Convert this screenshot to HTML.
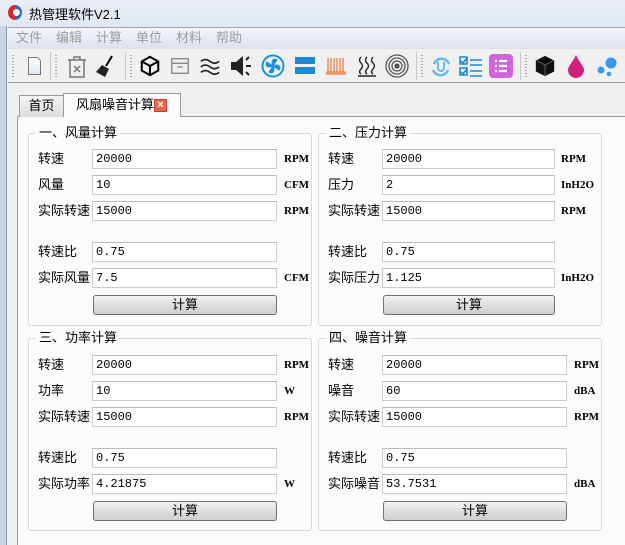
<!DOCTYPE html>
<html><head><meta charset="utf-8"><style>
*{margin:0;padding:0;box-sizing:border-box}
body{width:625px;height:545px;overflow:hidden;background:#f0f0f0;font-family:"Liberation Sans","Noto Sans CJK SC",sans-serif;font-size:12px;color:#000;position:relative}
.a{position:absolute}
.title{left:0;top:0;width:625px;height:28px;background:linear-gradient(#e9eef5,#dfe7f1)}
.frame{left:0;top:26px;width:7px;height:519px;background:#c8d5e5;border-right:1px solid #8e9aa8}
.menu{left:8px;top:27px;width:617px;height:22px;background:linear-gradient(#f4f6fa,#dbe1ec);border-top:1px solid #9aa6b5}
.menu span{position:absolute;top:0;line-height:20px;color:#9c9c9c;font-size:13px}
.tb{left:8px;top:49px;width:617px;height:34px;background:#f0f0f0;border-bottom:1px solid #a0a0a0}
.sep{position:absolute;top:3px;width:1px;height:28px;background:#c8c8c8}
.grip{position:absolute;top:6px;width:2px;height:22px;background:repeating-linear-gradient(#aaa 0 1px,transparent 1px 3px)}
.panel{left:17px;top:116px;width:608px;height:429px;background:#fbfbfb;border-top:1px solid #9a9a9a;border-left:1px solid #9a9a9a}
.tab1{left:19px;top:95px;width:45px;height:22px;background:linear-gradient(#f4f4f4,#dcdcdc);border:1px solid #9a9a9a;border-bottom:none;font-size:13px;text-align:center;line-height:20px}
.tab2{left:63px;top:93px;width:118px;height:24px;background:#fbfbfb;border:1px solid #9a9a9a;border-bottom:none;font-size:13px;line-height:22px;padding-left:12px}
.x{position:absolute;left:90px;top:5px;width:13px;height:13px;background:#e8674a;border:1px solid #c0402a;color:#fff;font-size:11px;line-height:10px;text-align:center;font-weight:bold}
.grp{position:absolute;border:1px solid #d5dbe3;border-radius:3px}
.gt{position:absolute;top:-10px;left:7px;background:#fbfbfb;padding:0 3px;font-size:13px;line-height:18px}
.lbl{position:absolute;font-size:13px;line-height:20px}
.in{position:absolute;height:20px;background:#fff;border:1px solid #c9ccd0;border-top-color:#b8bcc2;font-family:"Liberation Mono",monospace;font-size:12px;line-height:18px;padding-left:3px}
.u{position:absolute;font-family:"Liberation Serif",serif;font-size:11px;font-weight:bold}
.btn{position:absolute;height:20px;border:1px solid #707070;border-radius:3px;background:linear-gradient(#f4f4f4,#dedede 50%,#cfcfcf);text-align:center;font-size:13px;line-height:18px}
</style></head><body>
<div class="a title"></div>
<div class="a" style="left:8px;top:5px;width:14px;height:15px;border-radius:50%;background:radial-gradient(circle at 60% 50%,#fff 30%,transparent 32%),linear-gradient(90deg,#d8262b 50%,#2a6ab5 50%)"></div>
<div class="a" style="left:29px;top:4px;font-size:13px">热管理软件V2.1</div>
<div class="a frame"></div>
<div class="a menu"><span style="left:8px">文件</span><span style="left:48px">编辑</span><span style="left:88px">计算</span><span style="left:128px">单位</span><span style="left:168px">材料</span><span style="left:208px">帮助</span></div>
<div class="a tb">
<div class="grip" style="left:4px"></div>
<div class="a" style="left:20px;top:8px;width:13px;height:18px;border:1px solid #777;background:linear-gradient(#fff,#dde6f5);border-radius:0 5px 0 0"></div>
<div class="sep" style="left:42px"></div><div class="grip" style="left:47px"></div>
<svg class="a" style="left:57px;top:6px" width="24" height="24" viewBox="0 0 24 24" fill="none" stroke="#777" stroke-width="1.5"><path d="M3 5h18M9 5V2h6v3M5 5v17h14V5M9 11l6 6M15 11l-6 6"/></svg>
<svg class="a" style="left:86px;top:6px" width="24" height="24" viewBox="0 0 24 24"><path d="M18 1l-6 10" stroke="#000" stroke-width="2"/><path d="M8 10l7 4-4 8-9-5z" fill="#222"/></svg>
<div class="sep" style="left:117px"></div><div class="grip" style="left:122px"></div>
<svg class="a" style="left:131px;top:6px" width="22" height="22" viewBox="0 0 24 24" fill="none" stroke="#000" stroke-width="2.2"><path d="M12 2l9 5v10l-9 5-9-5V7zM3 7l9 5 9-5M12 12v10"/></svg>
<svg class="a" style="left:161px;top:6px" width="22" height="22" viewBox="0 0 24 24" fill="none" stroke="#888" stroke-width="1.5"><path d="M3 4h18v16H3zM3 9h18M9 13h6"/></svg>
<svg class="a" style="left:191px;top:7px" width="22" height="20" viewBox="0 0 24 20" fill="none" stroke="#222" stroke-width="1.8"><path d="M2 5q5-4 10 0t10 0M2 11q5-4 10 0t10 0M2 17q5-4 10 0t10 0"/></svg>
<svg class="a" style="left:221px;top:5px" width="24" height="24" viewBox="0 0 24 24"><path d="M2 8h5l7-6v20l-7-6H2z" fill="#222"/><path d="M17 6l3-3M17 12h5M17 18l3 3" stroke="#222" stroke-width="2"/></svg>
<svg class="a" style="left:253px;top:5px" width="24" height="24" viewBox="0 0 24 24" fill="none" stroke="#1e90d8" stroke-width="2"><circle cx="12" cy="12" r="10.5"/><path d="M12 12C9 5 14 4 16 6zM12 12c7-3 8 2 6 4zM12 12c3 7-2 8-4 6zM12 12c-7 3-8-2-6-4z" fill="#1e90d8" stroke-width="1"/></svg>
<div class="a" style="left:287px;top:8px;width:20px;height:7px;background:#1e88d5"></div><div class="a" style="left:287px;top:18px;width:20px;height:7px;background:#1e88d5"></div>
<svg class="a" style="left:318px;top:7px" width="20" height="20" viewBox="0 0 20 20" stroke="#e8824a" stroke-width="1.3"><path d="M2 2v14M5 2v14M8 2v14M11 2v14M14 2v14M17 2v14M1 16h18v2H1z" fill="#f3b08a"/></svg>
<svg class="a" style="left:348px;top:5px" width="22" height="24" viewBox="0 0 22 24" fill="none" stroke="#222" stroke-width="1.4"><path d="M5 3q-3 3 0 6t0 6 0 5M11 3q-3 3 0 6t0 6 0 5M17 3q-3 3 0 6t0 6 0 5M2 22h18"/></svg>
<svg class="a" style="left:377px;top:5px" width="24" height="24" viewBox="0 0 24 24" fill="none" stroke="#555" stroke-width="1.3"><circle cx="12" cy="12" r="11"/><circle cx="12" cy="12" r="8"/><circle cx="12" cy="12" r="5"/><circle cx="12" cy="12" r="2" fill="#555"/></svg>
<div class="sep" style="left:408px"></div><div class="grip" style="left:413px"></div>
<svg class="a" style="left:422px;top:7px" width="22" height="22" viewBox="0 0 22 22" fill="none" stroke="#6bb8ec" stroke-width="2.5"><path d="M4 8a8 8 0 0 1 15 0M18 14a8 8 0 0 1-15 0"/><path d="M8 6v6a3 3 0 0 0 6 0V6" stroke-width="2"/></svg>
<svg class="a" style="left:451px;top:6px" width="24" height="24" viewBox="0 0 24 24" fill="none" stroke="#1e88d5" stroke-width="1.6"><path d="M1 2h7v7H1zM1 13h7v7H1zM11 5h12M11 10h12M11 16h12M11 21h12M2 6l2 2 4-5M2 17l2 2 4-5"/></svg>
<div class="a" style="left:481px;top:5px;width:24px;height:24px;background:#d064dd;border-radius:4px"></div>
<svg class="a" style="left:481px;top:5px" width="24" height="24" viewBox="0 0 24 24" stroke="#fff" stroke-width="2.2"><path d="M6 7h2M10 7h8M6 12h2M10 12h8M6 17h2M10 17h8"/></svg>
<div class="sep" style="left:512px"></div><div class="grip" style="left:517px"></div>
<svg class="a" style="left:526px;top:6px" width="22" height="22" viewBox="0 0 24 24"><path d="M12 1l10 5v12l-10 5-10-5V6z" fill="#111"/><path d="M3 6l9 5 9-5M12 11v12" stroke="#666" stroke-width="1"/></svg>
<svg class="a" style="left:557px;top:5px" width="22" height="25" viewBox="0 0 22 25"><path d="M11 1C8 8 3 12 3 16a8 8 0 0 0 16 0c0-4-5-8-8-15z" fill="#d11f7a"/></svg>
<svg class="a" style="left:588px;top:6px" width="24" height="24" viewBox="0 0 24 24" fill="#3b96f0"><circle cx="15" cy="8" r="5.5"/><circle cx="5" cy="15" r="3.5"/><circle cx="13" cy="19" r="2.3"/></svg>
</div>
<div class="a panel"></div>
<div class="a tab1">首页</div>
<div class="a tab2">风扇噪音计算<div class="x">×</div></div>

<div class="grp" style="left:28px;top:133px;width:284px;height:193px"><div class="gt">一、风量计算</div></div>
<div class="lbl" style="left:38px;top:149px">转速</div><div class="in" style="left:92px;top:149px;width:185px">20000</div><div class="u" style="left:284px;top:153px">RPM</div>
<div class="lbl" style="left:38px;top:175px">风量</div><div class="in" style="left:92px;top:175px;width:185px">10</div><div class="u" style="left:284px;top:179px">CFM</div>
<div class="lbl" style="left:38px;top:201px">实际转速</div><div class="in" style="left:92px;top:201px;width:185px">15000</div><div class="u" style="left:284px;top:205px">RPM</div>
<div class="lbl" style="left:38px;top:242px">转速比</div><div class="in" style="left:92px;top:242px;width:185px">0.75</div>
<div class="lbl" style="left:38px;top:268px">实际风量</div><div class="in" style="left:92px;top:268px;width:185px">7.5</div><div class="u" style="left:284px;top:272px">CFM</div>
<div class="btn" style="left:93px;top:295px;width:184px">计算</div>

<div class="grp" style="left:318px;top:133px;width:284px;height:193px"><div class="gt">二、压力计算</div></div>
<div class="lbl" style="left:328px;top:149px">转速</div><div class="in" style="left:382px;top:149px;width:173px">20000</div><div class="u" style="left:561px;top:153px">RPM</div>
<div class="lbl" style="left:328px;top:175px">压力</div><div class="in" style="left:382px;top:175px;width:173px">2</div><div class="u" style="left:561px;top:179px">InH2O</div>
<div class="lbl" style="left:328px;top:201px">实际转速</div><div class="in" style="left:382px;top:201px;width:173px">15000</div><div class="u" style="left:561px;top:205px">RPM</div>
<div class="lbl" style="left:328px;top:242px">转速比</div><div class="in" style="left:382px;top:242px;width:173px">0.75</div>
<div class="lbl" style="left:328px;top:268px">实际压力</div><div class="in" style="left:382px;top:268px;width:173px">1.125</div><div class="u" style="left:561px;top:272px">InH2O</div>
<div class="btn" style="left:383px;top:295px;width:172px">计算</div>

<div class="grp" style="left:28px;top:338px;width:284px;height:193px"><div class="gt">三、功率计算</div></div>
<div class="lbl" style="left:38px;top:355px">转速</div><div class="in" style="left:92px;top:355px;width:185px">20000</div><div class="u" style="left:284px;top:359px">RPM</div>
<div class="lbl" style="left:38px;top:381px">功率</div><div class="in" style="left:92px;top:381px;width:185px">10</div><div class="u" style="left:284px;top:385px">W</div>
<div class="lbl" style="left:38px;top:407px">实际转速</div><div class="in" style="left:92px;top:407px;width:185px">15000</div><div class="u" style="left:284px;top:411px">RPM</div>
<div class="lbl" style="left:38px;top:448px">转速比</div><div class="in" style="left:92px;top:448px;width:185px">0.75</div>
<div class="lbl" style="left:38px;top:474px">实际功率</div><div class="in" style="left:92px;top:474px;width:185px">4.21875</div><div class="u" style="left:284px;top:478px">W</div>
<div class="btn" style="left:93px;top:501px;width:184px">计算</div>

<div class="grp" style="left:318px;top:338px;width:284px;height:193px"><div class="gt">四、噪音计算</div></div>
<div class="lbl" style="left:328px;top:355px">转速</div><div class="in" style="left:382px;top:355px;width:185px">20000</div><div class="u" style="left:574px;top:359px">RPM</div>
<div class="lbl" style="left:328px;top:381px">噪音</div><div class="in" style="left:382px;top:381px;width:185px">60</div><div class="u" style="left:574px;top:385px">dBA</div>
<div class="lbl" style="left:328px;top:407px">实际转速</div><div class="in" style="left:382px;top:407px;width:185px">15000</div><div class="u" style="left:574px;top:411px">RPM</div>
<div class="lbl" style="left:328px;top:448px">转速比</div><div class="in" style="left:382px;top:448px;width:185px">0.75</div>
<div class="lbl" style="left:328px;top:474px">实际噪音</div><div class="in" style="left:382px;top:474px;width:185px">53.7531</div><div class="u" style="left:574px;top:478px">dBA</div>
<div class="btn" style="left:383px;top:501px;width:184px">计算</div>
</body></html>
